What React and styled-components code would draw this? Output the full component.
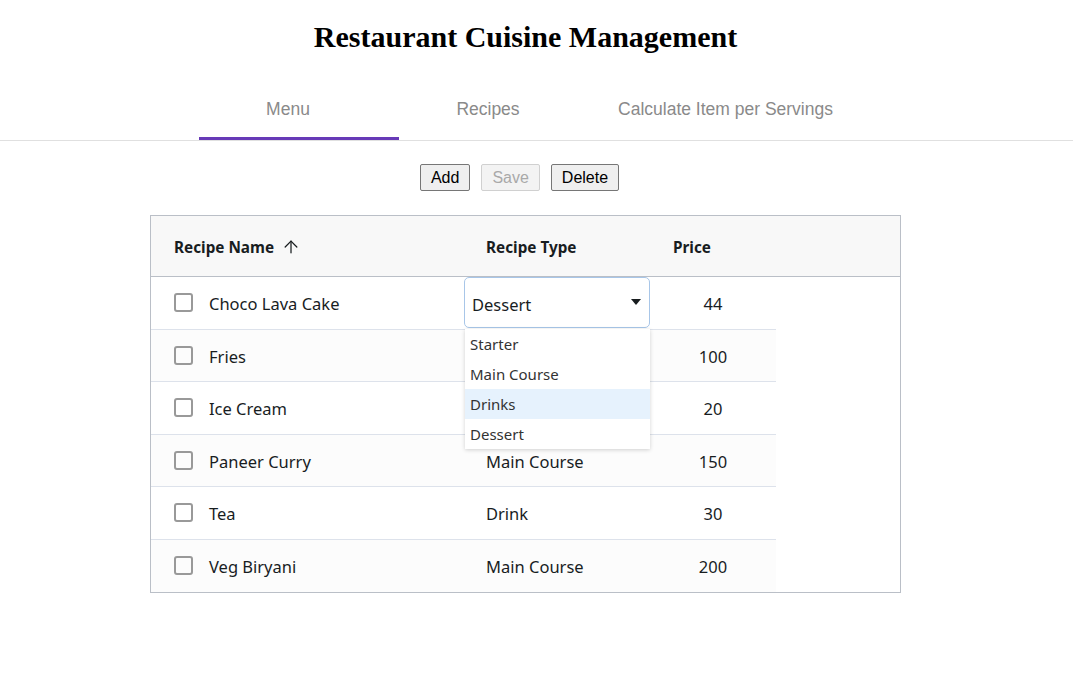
import styled, { createGlobalStyle } from "styled-components";
import { ArrowUp } from "lucide-react";

const GlobalStyle = createGlobalStyle`
  body {
    margin: 0;
    background: #fff;
    font-family: "Liberation Serif", serif;
  }
`;

const Page = styled.div`
  width: 1073px;
`;

const Title = styled.h1`
  margin: 0;
  padding: 18px 22px 0 0;
  height: 57px;
  text-align: center;
  font-family: "Liberation Serif", "Times New Roman", serif;
  font-size: 30px;
  font-weight: 700;
  line-height: 37px;
  color: #000;
`;

const TabBar = styled.div`
  display: flex;
  justify-content: center;
  border-bottom: 1px solid #e0e0e0;
`;

const Tab = styled.div`
  width: ${(p) => p.$width}px;
  box-sizing: border-box;
  padding: 6px 22px 0 0;
  height: 65px;
  display: flex;
  align-items: center;
  justify-content: center;
  font-family: "Liberation Sans", Arial, sans-serif;
  font-size: 17.5px;
  color: #8a8a8a;
  border-bottom: 3px solid ${(p) => (p.$active ? "#673ab7" : "transparent")};
`;

const Toolbar = styled.div`
  display: flex;
  justify-content: center;
  gap: 11px;
  margin-top: 23px;
  margin-left: -34px;
`;

const Button = styled.button`
  font-family: "Liberation Sans", Arial, sans-serif;
  font-size: 16px;
  height: 27px;
  padding: 0 10px;
  border: 1px solid ${(p) => (p.disabled ? "#d0d0d0" : "#767676")};
  border-radius: 2px;
  background: ${(p) => (p.disabled ? "#f3f3f3" : "#efefef")};
  color: ${(p) => (p.disabled ? "#a9a9a9" : "#000")};
`;

const Grid = styled.div`
  position: relative;
  margin: 24px 0 0 150px;
  width: 751px;
  box-sizing: border-box;
  border: 1px solid #babfc7;
  font-family: "Noto Sans", "Open Sans", sans-serif;
  color: #181d1f;
`;

const HeaderRow = styled.div`
  display: flex;
  height: 60px;
  background: #f8f8f8;
  border-bottom: 1px solid #babfc7;
`;

const HeaderCell = styled.div`
  width: ${(p) => p.$width}px;
  box-sizing: border-box;
  padding: 2px 0 0 23px;
  display: flex;
  align-items: center;
  gap: 7px;
  font-size: 15.3px;
  font-weight: 700;
`;

const Row = styled.div`
  display: flex;
  width: 625px;
  height: 52.5px;
  box-sizing: border-box;
  background: ${(p) => (p.$odd ? "#fcfcfc" : "#fff")};
  border-bottom: ${(p) => (p.$last ? "none" : "1px solid #dde2eb")};
`;

const Cell = styled.div`
  width: ${(p) => p.$width}px;
  box-sizing: border-box;
  padding: 2px 0 0 ${(p) => (p.$center ? 0 : 23)}px;
  display: flex;
  align-items: center;
  justify-content: ${(p) => (p.$center ? "center" : "flex-start")};
  font-size: 16.5px;
`;

const Checkbox = styled.span`
  width: 15px;
  height: 15px;
  margin-top: -2px;
  border: 2px solid #999;
  border-radius: 3px;
  margin-right: 16px;
`;

const SelectEditor = styled.div`
  position: absolute;
  left: 313px;
  top: 61px;
  width: 186px;
  height: 51px;
  box-sizing: border-box;
  border: 1px solid #a8c6e8;
  border-radius: 5px;
  background: #fff;
  display: flex;
  align-items: center;
  justify-content: space-between;
  padding: 3px 8px 0 7px;
  font-size: 16.5px;
`;

const Caret = styled.span`
  width: 0;
  height: 0;
  border-left: 5px solid transparent;
  border-right: 5px solid transparent;
  border-top: 6px solid #181d1f;
  margin-top: -4px;
`;

const OptionList = styled.div`
  position: absolute;
  left: 314px;
  top: 113px;
  width: 185px;
  background: #fff;
  box-shadow: 0 1px 4px rgba(0, 0, 0, 0.18);
`;

const Option = styled.div`
  height: 30px;
  display: flex;
  align-items: center;
  padding-left: 5px;
  font-size: 15px;
  color: #333;
  background: ${(p) => (p.$active ? "#e6f2fd" : "#fff")};
`;

const rows = [
  { name: "Choco Lava Cake", type: "Dessert", price: 44 },
  { name: "Fries", type: "Starter", price: 100 },
  { name: "Ice Cream", type: "Dessert", price: 20 },
  { name: "Paneer Curry", type: "Main Course", price: 150 },
  { name: "Tea", type: "Drink", price: 30 },
  { name: "Veg Biryani", type: "Main Course", price: 200 },
];

const options = ["Starter", "Main Course", "Drinks", "Dessert"];

const App = () => {
  return (
    <Page>
      <GlobalStyle />
      <Title>Restaurant Cuisine Management</Title>
      <TabBar>
        <Tab $width={200} $active>Menu</Tab>
        <Tab $width={200}>Recipes</Tab>
        <Tab $width={275}>Calculate Item per Servings</Tab>
      </TabBar>
      <Toolbar>
        <Button>Add</Button>
        <Button disabled>Save</Button>
        <Button>Delete</Button>
      </Toolbar>
      <Grid>
        <HeaderRow>
          <HeaderCell $width={312}>
            Recipe Name <ArrowUp size={20} strokeWidth={1.5} color="#181d1f" />
          </HeaderCell>
          <HeaderCell $width={187}>Recipe Type</HeaderCell>
          <HeaderCell $width={126}>Price</HeaderCell>
        </HeaderRow>
        {rows.map((r, i) => (
          <Row key={r.name} $odd={i % 2 === 1} $last={i === rows.length - 1}>
            <Cell $width={312}>
              <Checkbox />
              {r.name}
            </Cell>
            <Cell $width={187}>{i < 3 ? "" : r.type}</Cell>
            <Cell $width={126} $center>
              {r.price}
            </Cell>
          </Row>
        ))}
        <SelectEditor>
          Dessert
          <Caret />
        </SelectEditor>
        <OptionList>
          {options.map((o) => (
            <Option key={o} $active={o === "Drinks"}>
              {o}
            </Option>
          ))}
        </OptionList>
      </Grid>
    </Page>
  );
};

export default App;
